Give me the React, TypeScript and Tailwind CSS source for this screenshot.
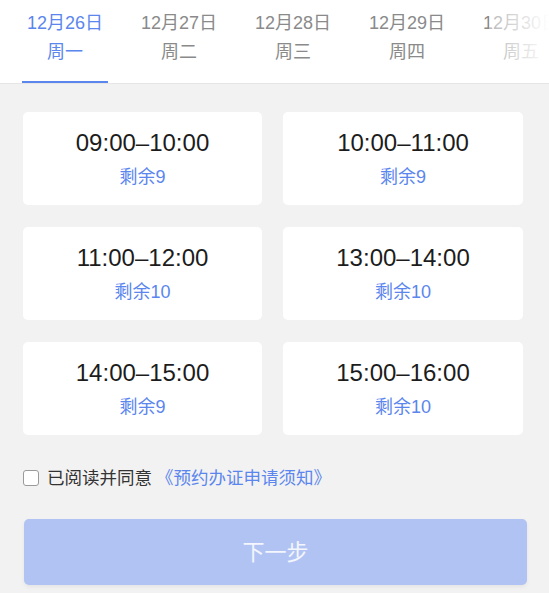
import { useState } from 'react';

const days = [
  { date: '12月26日', week: '周一' },
  { date: '12月27日', week: '周二' },
  { date: '12月28日', week: '周三' },
  { date: '12月29日', week: '周四' },
  { date: '12月30日', week: '周五' },
];

const slots = [
  { time: '09:00–10:00', left: 9 },
  { time: '10:00–11:00', left: 9 },
  { time: '11:00–12:00', left: 10 },
  { time: '13:00–14:00', left: 10 },
  { time: '14:00–15:00', left: 9 },
  { time: '15:00–16:00', left: 10 },
];

export default function App() {
  const [active, setActive] = useState(0);
  const [agreed, setAgreed] = useState(false);

  return (
    <div
      className="w-[549px] h-[593px] overflow-hidden bg-[#f2f2f2] flex flex-col"
      style={{ fontFamily: '"Liberation Sans", "Noto Sans CJK SC", sans-serif' }}
    >
      {/* date tabs */}
      <div className="relative h-[84px] shrink-0 bg-white border-b border-[#e6e6e6] flex pl-[8px] overflow-hidden">
        {days.map((d, i) => (
          <button
            key={d.date}
            onClick={() => setActive(i)}
            className={`w-[114px] shrink-0 flex flex-col items-center pt-[10px] ${
              i === active ? 'text-[#5b86ee]' : 'text-[#8a8a8a]'
            }`}
          >
            <span className="text-[18px] leading-[26px] whitespace-nowrap">{d.date}</span>
            <span className="text-[18px] leading-[26px] mt-[3px]">{d.week}</span>
            <span
              className={`mt-auto h-[2px] w-[86px] ${i === active ? 'bg-[#5b86ee]' : 'bg-transparent'}`}
            />
          </button>
        ))}
        <div className="pointer-events-none absolute right-0 top-0 h-full w-[60px] bg-gradient-to-r from-white/40 to-white" />
      </div>

      {/* time slots */}
      <div className="grid grid-cols-[239px_240px] gap-x-[21px] gap-y-[22px] pl-[23px] pt-[28px]">
        {slots.map((s) => (
          <div
            key={s.time}
            className="h-[93px] rounded-[5px] bg-white flex flex-col items-center justify-center gap-[7px]"
          >
            <span className="text-[24px] leading-[30px] text-[#1c1c1c]">{s.time}</span>
            <span className="text-[18px] leading-[24px] text-[#5b86ee]">剩余{s.left}</span>
          </div>
        ))}
      </div>

      {/* agreement */}
      <label className="flex items-center pl-[23px] mt-[31px] h-[24px] cursor-pointer">
        <span
          onClick={() => setAgreed(!agreed)}
          className={`w-[16px] h-[16px] rounded-[3px] border-[1.5px] border-[#9a9a9a] bg-white ${
            agreed ? 'bg-[#5b86ee] border-[#5b86ee]' : ''
          }`}
        />
        <span className="ml-[8px] text-[17.5px] text-[#333333]">已阅读并同意</span>
        <span className="ml-[4px] text-[17.5px] text-[#5b86ee]">《预约办证申请须知》</span>
      </label>

      {/* next button */}
      <div className="flex-1 pt-[29px]">
        <button
          disabled={!agreed}
          className="ml-[24px] w-[503px] h-[66px] rounded-[5px] bg-[#b1c3f2] text-[22px] text-white/85 shadow-[0_2px_4px_rgba(0,0,0,0.06)]"
        >
          下一步
        </button>
      </div>
    </div>
  );
}
